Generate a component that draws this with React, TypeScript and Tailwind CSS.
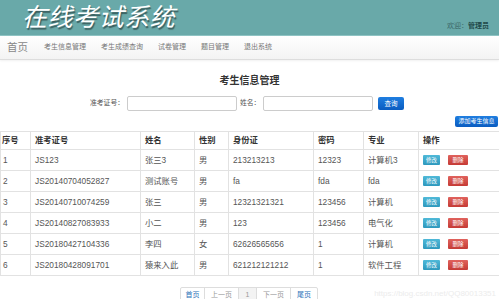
import React from 'react';

const font = { fontFamily: '"Liberation Sans", "Noto Sans CJK SC", sans-serif' };

const navItems = ['考生信息管理', '考生成绩查询', '试卷管理', '题目管理', '退出系统'];

const rows = [
  ['1', 'JS123', '张三3', '男', '213213213', '12323', '计算机3'],
  ['2', 'JS20140704052827', '测试账号', '男', 'fa', 'fda', 'fda'],
  ['3', 'JS20140710074259', '张三', '男', '12321321321', '123456', '计算机'],
  ['4', 'JS20140827083933', '小二', '男', '123', '123456', '电气化'],
  ['5', 'JS20180427104336', '李四', '女', '62626565656', '1', '计算机'],
  ['6', 'JS20180428091701', '猿来入此', '男', '621212121212', '1', '软件工程'],
];

const headers = ['序号', '准考证号', '姓名', '性别', '身份证', '密码', '专业', '操作'];
const widths = ['w-[30px]', 'w-[110px]', 'w-[54px]', 'w-[34px]', 'w-[85px]', 'w-[50px]', 'w-[55px]', 'w-[81px]'];

export default function App() {
  return (
    <div className="w-[499px] h-[299px] overflow-hidden bg-white text-[#333]" style={font}>
      {/* header */}
      <div className="h-[36px] bg-[#69a9a9] border-b border-[#8fc4c4] flex items-end justify-between pl-[22px] pr-[10px]">
        <div className="self-start mt-[2px] text-[25px] leading-[30px] italic text-white tracking-[0.5px] [text-shadow:1px_2px_1px_rgba(0,0,0,0.45)]">
          在线考试系统
        </div>
        <div className="text-[7px] mb-[4px] text-[#3d6b6b]">
          欢迎：<span className="font-bold text-[#1f4a4a]">管理员</span>
        </div>
      </div>

      {/* nav */}
      <div className="h-[24px] flex items-center border-b border-[#ddd] bg-gradient-to-b from-white to-[#f3f3f3] shadow-[0_1px_2px_rgba(0,0,0,0.06)] pl-[7px]">
        <span className="text-[10.5px] text-[#888] mr-[16px]">首页</span>
        <div className="flex gap-[15px]">
          {navItems.map((n) => (
            <span key={n} className="text-[7px] text-[#777]">{n}</span>
          ))}
        </div>
      </div>

      {/* title */}
      <div className="text-center text-[10px] font-bold text-[#333] mt-[15px] leading-[12px]">考生信息管理</div>

      {/* search */}
      <div className="flex items-center mt-[9px] pl-[90px] text-[6.8px] text-[#555]">
        <span className="w-[37px]">准考证号：</span>
        <div className="w-[110px] h-[15px] border border-[#ccc] rounded-[2px] bg-white" />
        <span className="ml-[3px] w-[23px]">姓名：</span>
        <div className="w-[110px] h-[15px] border border-[#ccc] rounded-[2px] bg-white" />
        <button className="ml-[5px] w-[26px] h-[13px] rounded-[2px] bg-gradient-to-b from-[#1f7ee0] to-[#0a5cc0] text-white text-[6.5px] leading-[13px]">
          查询
        </button>
      </div>

      <div className="flex justify-end mt-[5px] pr-[1px]">
        <button className="w-[43px] h-[11px] rounded-[2px] bg-gradient-to-b from-[#1f7ee0] to-[#0a5cc0] text-white text-[6px] leading-[11px] whitespace-nowrap">
          添加考生信息
        </button>
      </div>

      {/* table */}
      <table className="mt-[4px] table-fixed border-collapse w-[499px] text-[8.3px] text-[#555]">
        <thead>
          <tr className="h-[18px]">
            {headers.map((h, i) => (
              <th key={h} className={`${widths[i]} border border-[#e2e2e2] text-left font-bold text-[#333] ${i === 0 ? 'pl-[1px]' : 'pl-[4px]'}`}>
                {h}
              </th>
            ))}
          </tr>
        </thead>
        <tbody>
          {rows.map((r) => (
            <tr key={r[0]} className="h-[21px]">
              {r.map((c, i) => (
                <td key={i} className={`border border-[#e2e2e2] whitespace-nowrap overflow-hidden ${i === 0 ? 'pl-[2px]' : 'pl-[4px]'}`}>
                  {c}
                </td>
              ))}
              <td className="border border-[#e2e2e2] pl-[4px]">
                <div className="flex gap-[8px]">
                  <span className="w-[17px] h-[10px] rounded-[1px] bg-gradient-to-b from-[#4fb9d8] to-[#2d98bd] text-white text-[5.5px] leading-[10px] text-center">修改</span>
                  <span className="w-[20px] h-[10px] rounded-[1px] bg-gradient-to-b from-[#e0625d] to-[#c53a35] text-white text-[5.5px] leading-[10px] text-center">删除</span>
                </div>
              </td>
            </tr>
          ))}
        </tbody>
      </table>

      {/* pagination */}
      <div className="relative mt-[11px] flex justify-center">
        <div className="flex border border-[#ddd] rounded-[2px] text-[7px] h-[16px] leading-[14px] ml-[-1px]">
          <span className="w-[24px] text-center text-[#2a6fb8] border-r border-[#ddd]">首页</span>
          <span className="w-[34px] text-center text-[#999] border-r border-[#ddd]">上一页</span>
          <span className="w-[18px] text-center text-[#999] bg-[#f3f3f3] border-r border-[#ddd]">1</span>
          <span className="w-[34px] text-center text-[#999] border-r border-[#ddd]">下一页</span>
          <span className="w-[26px] text-center text-[#2a6fb8]">尾页</span>
        </div>
        <span className="absolute right-[3px] top-[1px] text-[8px] text-[#ececec]">https://blog.csdn.net/QQ80013351</span>
      </div>
    </div>
  );
}
